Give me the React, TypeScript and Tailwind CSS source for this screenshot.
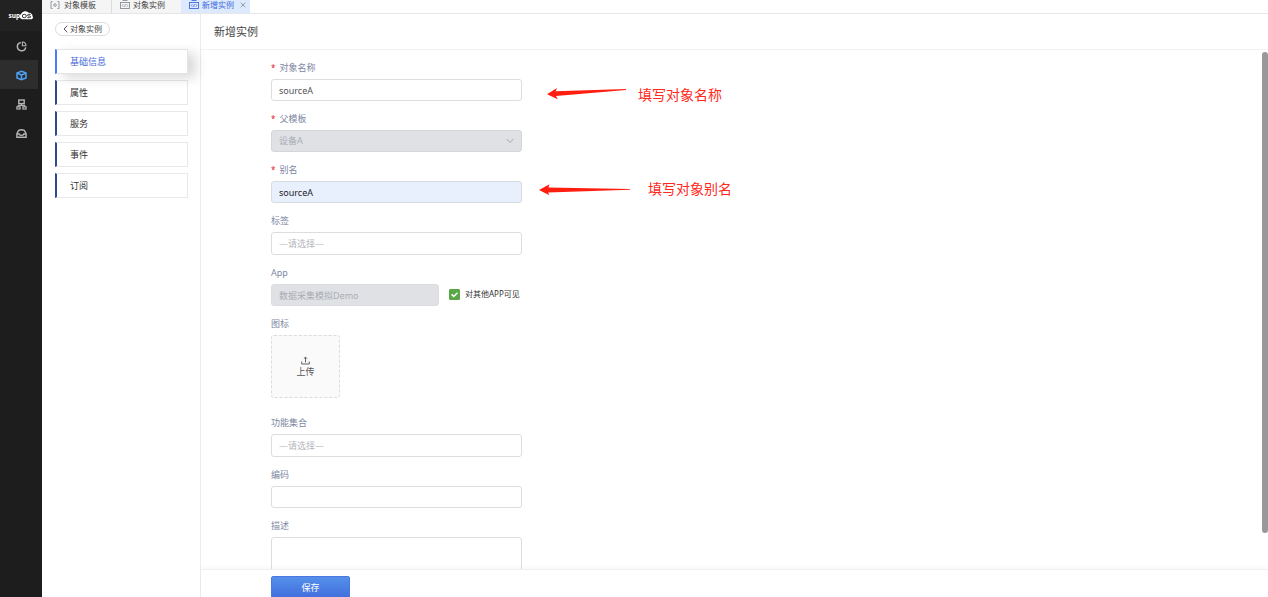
import type { ReactNode } from "react";

const FIELD =
  "block w-full rounded-[3px] border border-[#dcdde1] px-[7px] text-[9px] text-[#555] placeholder:text-[#b4b6bc] outline-none";

function TemplateIcon() {
  return (
    <svg viewBox="0 0 10 10" className="h-[10px] w-[10px] shrink-0" fill="none" stroke="#8b9098">
      <path d="M2.5 1.5H1v7h1.5M7.5 1.5H9v7H7.5" strokeWidth="0.9" />
      <circle cx="5" cy="5" r="1.3" strokeWidth="0.9" />
    </svg>
  );
}

function InstanceIcon({ color }: { color: string }) {
  return (
    <svg viewBox="0 0 10 10" className="h-[10px] w-[10px] shrink-0" fill="none" stroke={color}>
      <path d="M2.5 0.5h5" strokeWidth="0.9" />
      <rect x="0.5" y="2.5" width="9" height="6" strokeWidth="0.9" />
      <path d="M3.4 4.2 2.2 5.5l1.2 1.3M6.6 4.2 7.8 5.5 6.6 6.8M5.4 4 4.6 7" strokeWidth="0.8" />
    </svg>
  );
}

function Logo() {
  return (
    <svg viewBox="0 0 26 12" className="h-[12px] w-[26px]" role="img" aria-label="supOS">
      <text x="0.5" y="8" fill="#fff" fontSize="6.5" fontWeight="700" fontFamily="Noto Sans, sans-serif">
        sup
      </text>
      <path
        d="M14 9.2a2.8 2.8 0 0 1-1-5.1 4.8 4.8 0 0 1 7.9-1.4 3.4 3.4 0 0 1 3.6 3.5 1.8 1.8 0 0 1-1 3Z"
        fill="#fff"
      />
      <ellipse cx="16.3" cy="6" rx="2" ry="1.7" fill="none" stroke="#222" strokeWidth="0.9" />
      <path d="M22.6 4.4h-2.1q-1 0-1 .8t1 .8h1.1q1 0 1 .8t-1 .8h-2.2" fill="none" stroke="#222" strokeWidth="0.9" />
    </svg>
  );
}

const NAV: { name: string; icon: ReactNode }[] = [
  {
    name: "概览",
    icon: (
      <>
        <path d="M4.8 1.4a4.2 4.2 0 1 0 4.9 4.9" strokeWidth="1.5" />
        <path d="M6.4 1v3.8H10A3.8 3.8 0 0 0 6.4 1Z" strokeWidth="1.1" />
      </>
    ),
  },
  {
    name: "对象",
    icon: (
      <>
        <path d="M5.5 1.2 10 2.9v5L5.5 9.8 1 7.9v-5Z" strokeWidth="1.5" />
        <path d="M1.3 3.2 5.5 5l4.2-1.8M5.5 5v4.6" strokeWidth="1.5" />
      </>
    ),
  },
  {
    name: "拓扑",
    icon: (
      <>
        <rect x="2.8" y="1" width="5.4" height="3.6" strokeWidth="1.4" />
        <path d="M5.5 4.6v1.8M2.4 8V6.4h6.2V8" strokeWidth="1.2" />
        <rect x="0.9" y="7.8" width="3.2" height="2.2" strokeWidth="1.2" />
        <rect x="6.9" y="7.8" width="3.2" height="2.2" strokeWidth="1.2" />
      </>
    ),
  },
  {
    name: "消息",
    icon: (
      <>
        <path d="M0.9 5.6 2.7 2.4Q5.5 1 8.3 2.4l1.8 3.2v3.6H.9Z" strokeWidth="1.4" />
        <path d="M1 6h2.2q.5 1.4 2.3 1.4T7.8 6H10" strokeWidth="1.4" />
      </>
    ),
  },
];

function Field({
  id,
  label,
  required,
  children,
}: {
  id: string;
  label: string;
  required?: boolean;
  children: ReactNode;
}) {
  return (
    <div>
      <label htmlFor={id} className="flex h-6 items-center gap-1 pt-[2px] text-[9px] text-[#7d87a3]">
        {required && <span className="text-[8px] text-[#e02020]">*</span>}
        {label}
      </label>
      <div className="relative">{children}</div>
    </div>
  );
}

function Sidebar() {
  return (
    <nav className="flex w-[42px] shrink-0 flex-col bg-[#1d1d1d]">
      <div className="flex h-[31px] items-center justify-center bg-[#222]">
        <Logo />
      </div>
      {NAV.map((item, i) => (
        <button
          key={item.name}
          aria-label={item.name}
          className={
            i === 1
              ? "mr-1 flex h-[29px] items-center justify-center bg-[#2d2d2d] pl-1 pt-[2px] text-[#4da3f5]"
              : "mr-1 flex h-[29px] items-center justify-center pl-1 pt-[2px] text-[#b5b5b5]"
          }
        >
          <svg viewBox="0 0 11 11" className="h-[11px] w-[11px]" fill="none" stroke="currentColor">
            {item.icon}
          </svg>
        </button>
      ))}
    </nav>
  );
}

function Tabs() {
  return (
    <div className="flex h-[14px] shrink-0 overflow-hidden border-b border-[#e6e6ea] bg-white text-[8px] leading-[10px] text-[#444]">
      <div className="flex bg-[#f5f5f5]">
        <a href="#templates" className="flex w-[69px] items-start gap-1 pl-2">
          <TemplateIcon />
          对象模板
        </a>
        <a href="#instances" className="flex w-[70px] items-start gap-[3px] border-l border-[#dcdcdc] pl-2">
          <InstanceIcon color="#8b9098" />
          对象实例
        </a>
      </div>
      <div className="flex w-[69px] items-start bg-[#dde9fc] pl-2 text-[#4169dc]">
        <a href="#new" className="flex items-start gap-[3px]">
          <InstanceIcon color="#4169dc" />
          新增实例
        </a>
        <button aria-label="关闭" className="ml-[6px] flex h-[10px] items-center">
          <svg viewBox="0 0 6 6" className="h-[6px] w-[6px]" stroke="#8d95a5" strokeWidth="0.9">
            <path d="M.7.7l4.6 4.6M5.3.7.7 5.3" />
          </svg>
        </button>
      </div>
    </div>
  );
}

function SectionMenu() {
  return (
    <aside className="flex w-[159px] shrink-0 flex-col border-r border-[#ebebf7] pl-[13px] pr-3 pt-2">
      <button className="flex h-[14px] w-[55px] items-center justify-center gap-[2px] rounded-full border border-[#dcdcdc] text-[8px] leading-none text-[#444]">
        <svg viewBox="0 0 5 8" className="h-2 w-[5px]" fill="none" stroke="#555">
          <path d="M4.3.7 1 4l3.3 3.3" />
        </svg>
        对象实例
      </button>
      <div className="mt-[13px] flex flex-col gap-[6px] text-[9px]">
        <button className="relative h-[25px] border border-l-2 border-[#e4e4e8] border-l-[#4f7af5] bg-white pl-[13px] pt-px text-left text-[#4468d8] shadow-[8px_4px_12px_rgba(0,0,0,0.15)]">
          基础信息
        </button>
        {["属性", "服务", "事件", "订阅"].map((name) => (
          <button
            key={name}
            className="h-[25px] border border-l-2 border-[#e8e8ea] border-l-[#2f4a8c] pl-[13px] pt-px text-left text-[#333]"
          >
            {name}
          </button>
        ))}
      </div>
    </aside>
  );
}

function Form() {
  return (
    <form id="instance" className="flex w-[251px] flex-col gap-[5px] pt-[5px]">
      <Field id="name" label="对象名称" required>
        <input id="name" defaultValue="sourceA" className={`${FIELD} h-[22px]`} />
        <div className="absolute left-[276px] top-2 flex items-start gap-[11px]">
          <svg viewBox="0 0 80 13" className="h-[13px] w-20" fill="#ff1e10">
            <path d="M0 7.2 10 1 8.6 4.2 79 2v1L9 9l1.8 3.2Z" />
          </svg>
          <span className="whitespace-nowrap text-[14px] leading-4 text-[#ff2a1c]">填写对象名称</span>
        </div>
      </Field>
      <Field id="parent" label="父模板" required>
        <select
          id="parent"
          disabled
          className="block h-[22px] w-full appearance-none rounded-[3px] border border-[#d5d6da] bg-[#e0e1e5] px-[7px] text-[9px] text-[#a9acb3] opacity-100"
        >
          <option>设备A</option>
        </select>
        <svg
          viewBox="0 0 8 6"
          className="pointer-events-none absolute right-2 top-2 h-[6px] w-2"
          fill="none"
          stroke="#a4a7ae"
        >
          <path d="M.8 1 4 4.6 7.2 1" />
        </svg>
      </Field>
      <Field id="alias" label="别名" required>
        <input
          id="alias"
          defaultValue="sourceA"
          className="block h-[22px] w-full rounded-[3px] border border-[#d9dade] bg-[#e8effd] px-[7px] text-[9px] text-[#222] outline-none"
        />
        <div className="absolute left-[268px] top-0 flex items-start gap-[18px]">
          <svg viewBox="0 0 91 16" className="h-4 w-[91px]" fill="#ff1e10">
            <path d="M0 9 10.5 3.2 9.4 6.6 91 8v.8L9 11.4l1.4 2.8Z" />
          </svg>
          <span className="whitespace-nowrap text-[14px] leading-4 text-[#ff2a1c]">填写对象别名</span>
        </div>
      </Field>
      <Field id="tags" label="标签">
        <input id="tags" placeholder="—请选择—" className={`${FIELD} h-[23px]`} />
      </Field>
      <Field id="app" label="App">
        <div className="flex items-center">
          <input
            id="app"
            disabled
            defaultValue="数据采集模拟Demo"
            className="block h-[22px] w-[168px] rounded-[3px] border border-[#dcdde1] bg-[#e0e1e5] px-[7px] text-[9px] text-[#a9acb3]"
          />
          <label className="mb-[2px] ml-[10px] flex items-center gap-[5px] whitespace-nowrap text-[8px] text-[#333]">
            <span className="relative flex">
              <input
                type="checkbox"
                defaultChecked
                className="peer h-[11px] w-[11px] appearance-none rounded-[1px] border border-[#5aa845] checked:bg-[#5aa845]"
              />
              <svg
                viewBox="0 0 11 11"
                className="pointer-events-none absolute inset-0 hidden h-[11px] w-[11px] peer-checked:block"
                fill="none"
                stroke="#fff"
                strokeWidth="1.5"
              >
                <path d="M2.6 5.4 4.7 7.5 8.5 3.7" />
              </svg>
            </span>
            对其他APP可见
          </label>
        </div>
      </Field>
      <Field id="icon" label="图标">
        <button
          id="icon"
          type="button"
          className="mb-[7px] flex h-[63px] w-[69px] flex-col items-center justify-center rounded-[3px] border border-dashed border-[#dcdcdc] bg-[#fafafa] pt-[2px] text-[9px] leading-[14px] text-[#555]"
        >
          <svg viewBox="0 0 9 9" className="h-[9px] w-[9px]" fill="none" stroke="#555" strokeWidth="0.9">
            <path d="M.7 5.5V8h7.6V5.5M4.5 6.5V1.2M2.9 2.7l1.6-1.6 1.6 1.6" />
          </svg>
          上传
        </button>
      </Field>
      <Field id="features" label="功能集合">
        <input id="features" placeholder="—请选择—" className={`${FIELD} h-[23px]`} />
      </Field>
      <Field id="code" label="编码">
        <input id="code" className={`${FIELD} h-[22px]`} />
      </Field>
      <Field id="description" label="描述">
        <textarea id="description" className={`${FIELD} h-16 resize-none py-1`} />
      </Field>
    </form>
  );
}

export default function App() {
  return (
    <div
      lang="zh-CN"
      className="flex h-screen overflow-hidden bg-white font-['Noto_Sans','Noto_Sans_CJK_SC',sans-serif]"
    >
      <Sidebar />
      <div className="flex min-w-0 flex-1 flex-col">
        <Tabs />
        <div className="flex min-h-0 flex-1">
          <SectionMenu />
          <main className="flex min-w-0 flex-1 flex-col">
            <h1 className="flex h-9 shrink-0 items-center border-b border-[#f3f3f5] pl-[13px] pt-[2px] text-[11px] text-[#444]">
              新增实例
            </h1>
            <div className="flex min-h-0 flex-1">
              <div className="min-w-0 flex-1 overflow-hidden pl-[70px]">
                <Form />
              </div>
              <div className="w-[6px] shrink-0 pt-[2px]">
                <div className="h-[93%] rounded-[3px] bg-[#999]" />
              </div>
            </div>
            <footer className="relative flex h-7 shrink-0 items-start overflow-hidden border-t border-[#f0f0f2] bg-white pl-[70px] pt-[6px] shadow-[0_-2px_4px_rgba(0,0,0,0.03)]">
              <button
                type="submit"
                form="instance"
                className="h-6 w-[79px] shrink-0 rounded-[2px] border border-[#4a78e0] bg-linear-to-b from-[#5590ea] to-[#416cdc] text-[9px] text-white"
              >
                保存
              </button>
            </footer>
          </main>
        </div>
      </div>
    </div>
  );
}
